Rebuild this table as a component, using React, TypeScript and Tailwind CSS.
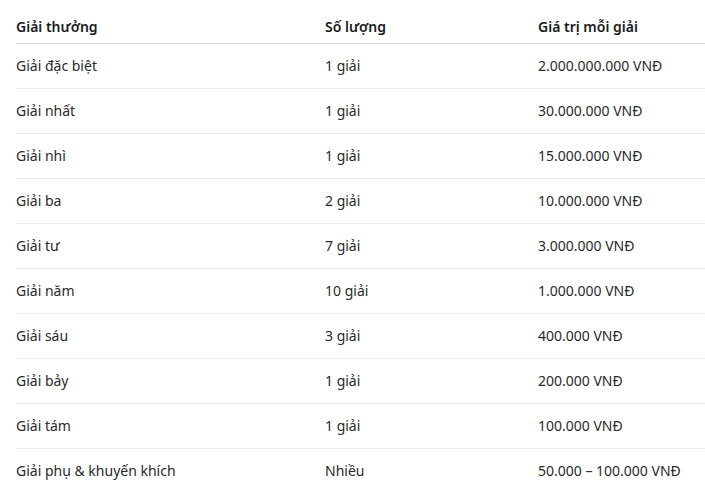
const prizes = [
  { name: "Giải đặc biệt", qty: "1 giải", value: "2.000.000.000 VNĐ" },
  { name: "Giải nhất", qty: "1 giải", value: "30.000.000 VNĐ" },
  { name: "Giải nhì", qty: "1 giải", value: "15.000.000 VNĐ" },
  { name: "Giải ba", qty: "2 giải", value: "10.000.000 VNĐ" },
  { name: "Giải tư", qty: "7 giải", value: "3.000.000 VNĐ" },
  { name: "Giải năm", qty: "10 giải", value: "1.000.000 VNĐ" },
  { name: "Giải sáu", qty: "3 giải", value: "400.000 VNĐ" },
  { name: "Giải bảy", qty: "1 giải", value: "200.000 VNĐ" },
  { name: "Giải tám", qty: "1 giải", value: "100.000 VNĐ" },
  { name: "Giải phụ & khuyến khích", qty: "Nhiều", value: "50.000 – 100.000 VNĐ" },
];

export default function App() {
  return (
    <div className="min-h-screen bg-white pl-4 pt-[11px] font-['Segoe_UI','Noto_Sans',sans-serif] text-[14px] text-[#2a2a2a]">
      <table className="w-full border-collapse text-left">
        <thead>
          <tr className="border-b border-[#d9d9d9]">
            <th className="h-8 w-[309px] p-0 font-semibold text-[#1a1a1a]">Giải thưởng</th>
            <th className="h-8 w-[213px] p-0 font-semibold text-[#1a1a1a]">Số lượng</th>
            <th className="h-8 p-0 font-semibold text-[#1a1a1a]">Giá trị mỗi giải</th>
          </tr>
        </thead>
        <tbody>
          {prizes.map((p, i) => (
            <tr key={p.name} className={i < prizes.length - 1 ? "border-b border-[#ededed]" : ""}>
              <td className="h-[45px] p-0">{p.name}</td>
              <td className="h-[45px] p-0">{p.qty}</td>
              <td className="h-[45px] p-0">{p.value}</td>
            </tr>
          ))}
        </tbody>
      </table>
    </div>
  );
}
